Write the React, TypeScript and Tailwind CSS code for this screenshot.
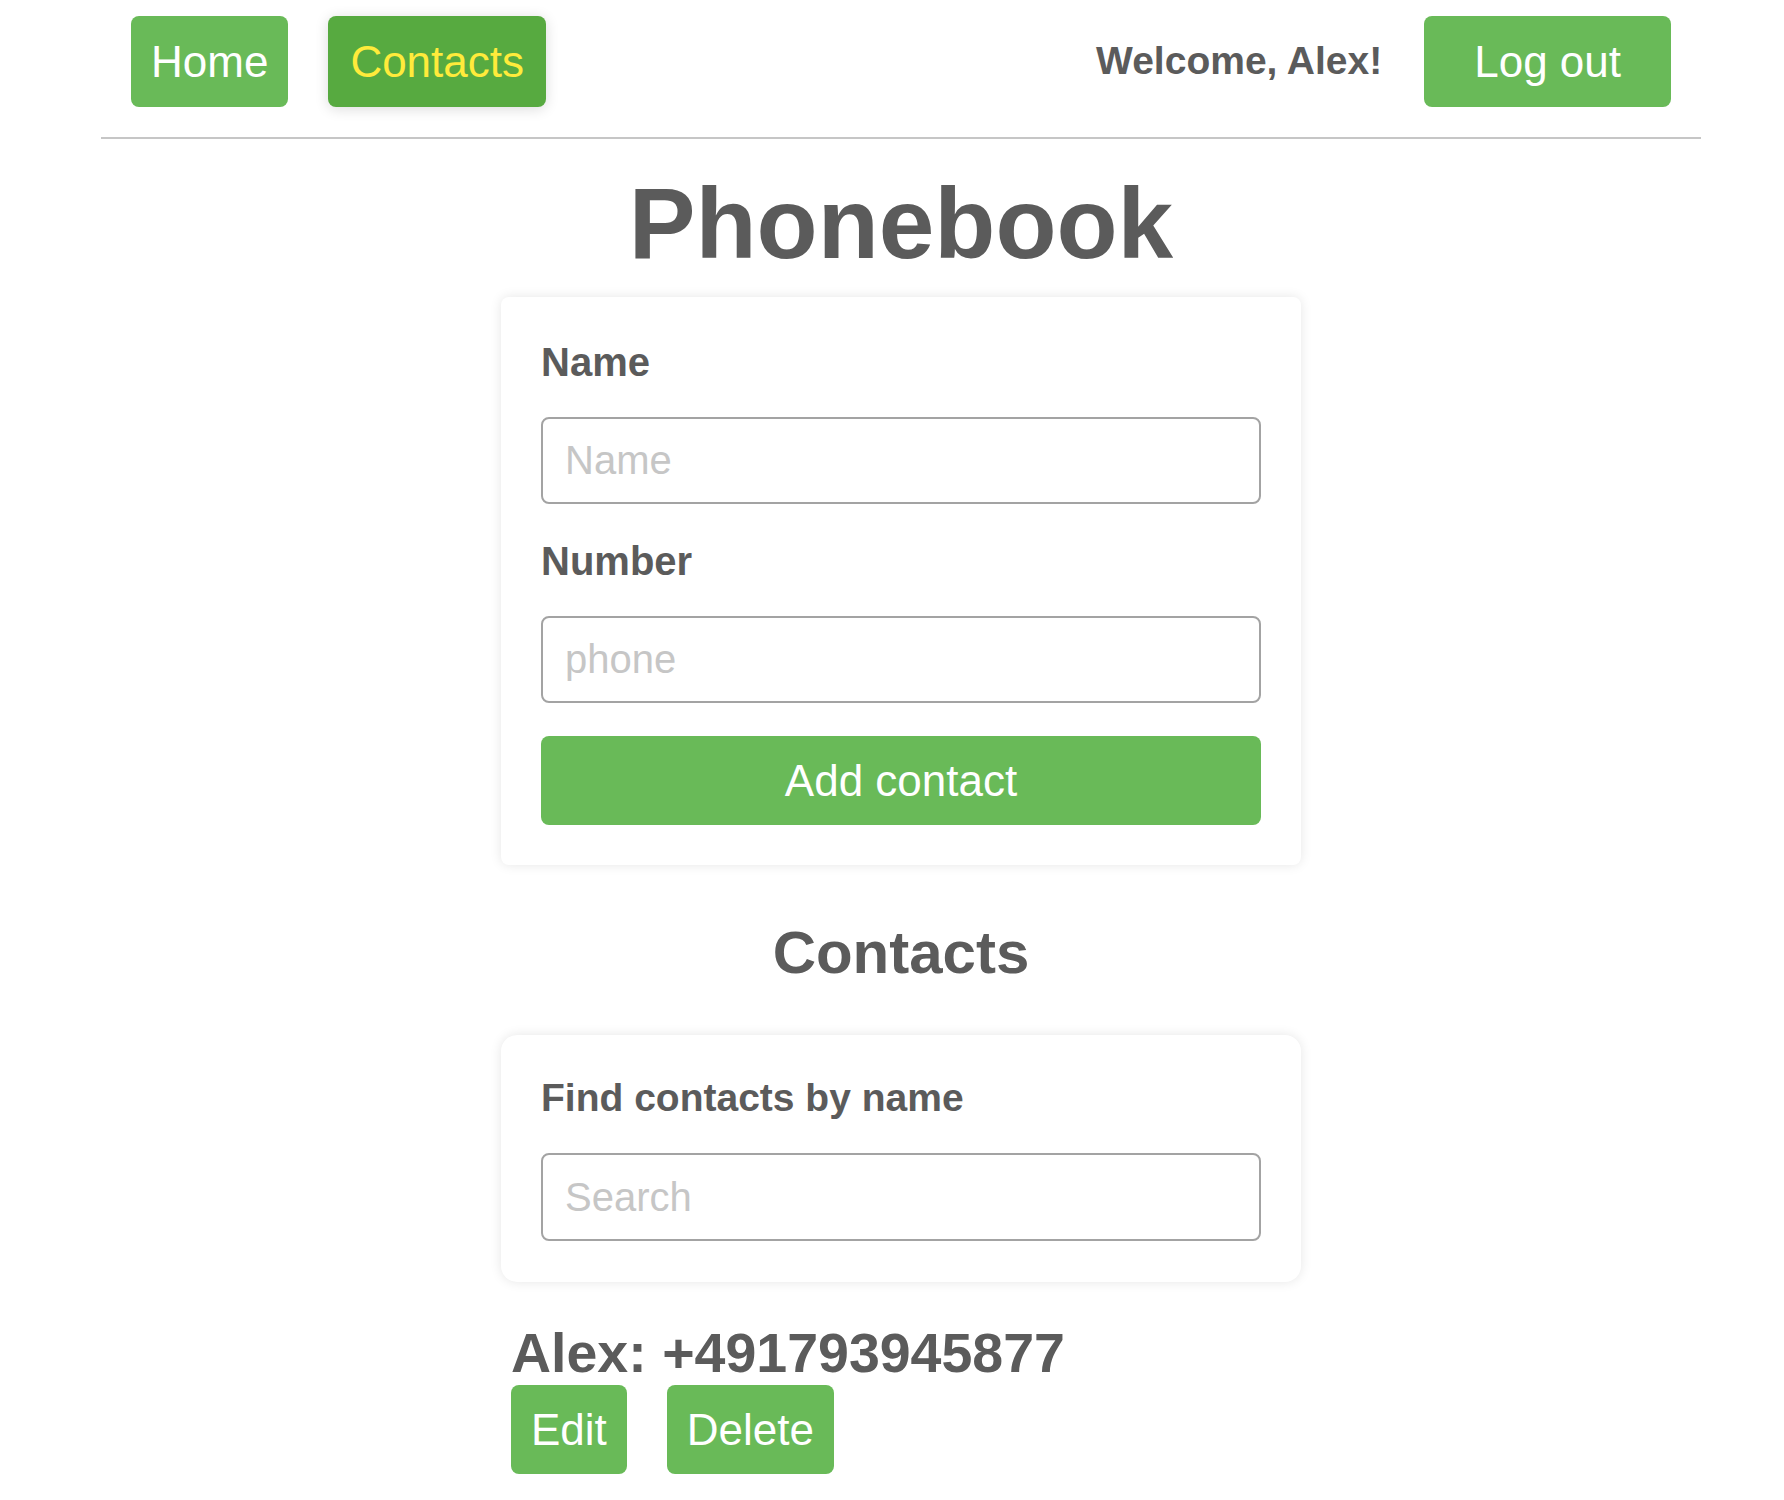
import { useState } from "react";

const green = "bg-[#69ba58]";

export default function App() {
  const [name, setName] = useState("");
  const [number, setNumber] = useState("");
  const [filter, setFilter] = useState("");

  const contacts = [{ id: 1, name: "Alex", number: "+491793945877" }];

  return (
    <div className="min-h-screen bg-white pl-[18px] font-['Liberation_Sans',Arial,sans-serif] text-[#5b5b5b]">
      <div className="mx-auto w-[1600px]">
        {/* Header */}
        <header className="flex items-center justify-between border-b-2 border-[#c6c6c6] px-[30px] pb-[30px] pt-4">
          <nav className="flex gap-10">
            <a className={`${green} rounded-lg p-5 text-[44px] leading-[51px] text-white`}>Home</a>
            <a className="rounded-lg bg-[#57aa40] px-[22px] py-5 text-[44px] leading-[51px] text-[#ffeb3b] shadow-[0_2px_14px_rgba(0,0,0,0.14)]">
              Contacts
            </a>
          </nav>
          <div className="flex items-center gap-[42px]">
            <p className="text-[39px] font-bold">Welcome, Alex!</p>
            <button className={`${green} rounded-lg px-[50px] py-5 text-[44px] leading-[51px] text-white`}>
              Log out
            </button>
          </div>
        </header>

        <main className="flex flex-col items-center">
          <h1 className="mt-[27px] text-[100px] font-bold leading-[115px]">Phonebook</h1>

          {/* Add form */}
          <form
            className="mt-4 flex w-[800px] flex-col rounded-lg bg-white px-10 pb-10 pt-[42px] shadow-[0_0_12px_rgba(0,0,0,0.1)]"
            onSubmit={(e) => e.preventDefault()}
          >
            <label className="mb-8 text-[40px] font-bold leading-[46px]">Name</label>
            <input
              value={name}
              onChange={(e) => setName(e.target.value)}
              placeholder="Name"
              className="h-[87px] w-full rounded-lg border-2 border-[#a3a3a3] px-[22px] text-[40px] outline-none placeholder:text-[#c6c6c6]"
            />
            <label className="mb-8 mt-[34px] text-[40px] font-bold leading-[46px]">Number</label>
            <input
              value={number}
              onChange={(e) => setNumber(e.target.value)}
              placeholder="phone"
              className="h-[87px] w-full rounded-lg border-2 border-[#a3a3a3] px-[22px] text-[40px] outline-none placeholder:text-[#c6c6c6]"
            />
            <button className={`${green} mt-[33px] h-[89px] w-full rounded-lg text-[44px] text-white`}>
              Add contact
            </button>
          </form>

          <h2 className="mt-[53px] text-[60px] font-bold leading-[69px]">Contacts</h2>

          {/* Filter */}
          <div className="mt-12 flex w-[800px] flex-col rounded-2xl bg-white px-10 pb-[41px] pt-10 shadow-[0_0_12px_rgba(0,0,0,0.1)]">
            <label className="mb-8 text-[39px] font-bold leading-[46px]">Find contacts by name</label>
            <input
              value={filter}
              onChange={(e) => setFilter(e.target.value)}
              placeholder="Search"
              className="h-[88px] w-full rounded-lg border-2 border-[#a3a3a3] px-[22px] text-[40px] outline-none placeholder:text-[#c6c6c6]"
            />
          </div>

          {/* List */}
          <ul className="mt-10 w-[800px] pl-[10px]">
            {contacts.map((c) => (
              <li key={c.id}>
                <p className="text-[55.5px] font-bold leading-[63px]">
                  {c.name}: {c.number}
                </p>
                <div className="flex gap-10">
                  <button className={`${green} rounded-lg p-5 text-[44px] leading-[49px] text-white`}>Edit</button>
                  <button className={`${green} rounded-lg p-5 text-[44px] leading-[49px] text-white`}>Delete</button>
                </div>
              </li>
            ))}
          </ul>
        </main>
      </div>
    </div>
  );
}
